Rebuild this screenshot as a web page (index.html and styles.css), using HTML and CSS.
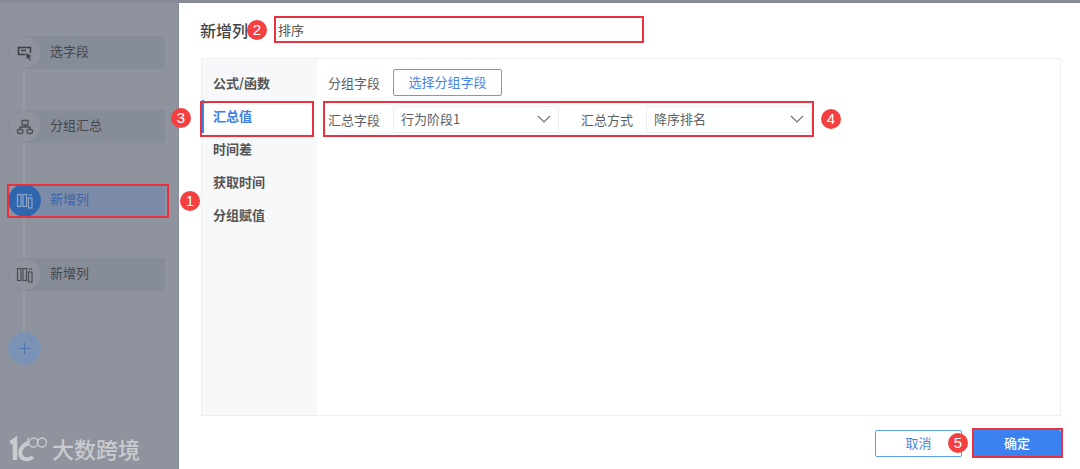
FILE: index.html
```html
<!DOCTYPE html>
<html lang="zh">
<head>
<meta charset="utf-8">
<title>新增列</title>
<link rel="stylesheet" href="styles.css">
</head>
<body>
<div class="app">
  <div class="topstrip"></div>
  <div class="content">
    <aside class="side">
      <div class="rail"></div>
      <div class="step">
        <span class="dot"><svg width="18" height="18" viewBox="0 0 18 18"><path d="M9.500 10.500h-7v-7h12v5.500" fill="none" stroke="#3c3f47" stroke-width="1.500"/><path d="M5 6.500h5" stroke="#3c3f47" stroke-width="1.500"/><path d="M10 9l5.500 3-2.200 1 1.500 3-1 .5-1.500-2.800-1.500 1.300z" fill="#3c3f47"/></svg></span>
        <span class="label">选字段</span>
      </div>
      <div class="step">
        <span class="dot"><svg width="18" height="18" viewBox="0 0 18 18" fill="none" stroke="#4a4d55" stroke-width="1.300"><rect x="6" y="2.500" width="6" height="4.500" rx=".5"/><rect x="1.500" y="11.500" width="5.500" height="4" rx="1.500"/><rect x="11" y="11.500" width="5.500" height="4" rx="1.500"/><path d="M9 7v2M4 11.500v-2.500h10v2.500"/></svg></span>
        <span class="label">分组汇总</span>
      </div>
      <div class="step active">
        <span class="dot"><svg width="18" height="18" viewBox="0 0 18 18" fill="none" stroke="#8fa6c9" stroke-width="1.200"><rect x="1.500" y="2.500" width="3.500" height="12"/><rect x="7" y="2.500" width="3.500" height="12"/><rect x="12.500" y="6" width="3.500" height="10"/><path d="M12.500 3h3.500"/></svg></span>
        <span class="label">新增列</span>
      </div>
      <div class="step">
        <span class="dot"><svg width="18" height="18" viewBox="0 0 18 18" fill="none" stroke="#4a4d55" stroke-width="1.200"><rect x="1.500" y="2.500" width="3.500" height="12"/><rect x="7" y="2.500" width="3.500" height="12"/><rect x="12.500" y="6" width="3.500" height="10"/><path d="M12.500 3h3.500"/></svg></span>
        <span class="label">新增列</span>
      </div>
      <div class="step add">
        <span class="dot"><svg width="11" height="11" viewBox="0 0 11 11"><path d="M5.500 0v11M0 5.500h11" stroke="#4f71ad" stroke-width="1"/></svg></span>
      </div>
      <div class="brand">
        <svg class="brand-logo" width="40" height="30" viewBox="0 0 40 30" fill="none" stroke="#c9cbce"><path d="M2.500 10L7 7V27" stroke-width="4.500"/><path d="M20 10C13 13 11 19 13 23C15 27 21 27 25 24" stroke-width="4"/><path d="M20 4.500V13" stroke-width="1.300"/><circle cx="25.500" cy="9.500" r="4.500" stroke-width="1.300"/><circle cx="34" cy="9.500" r="4.500" stroke-width="1.300"/></svg>
        <span class="brand-text">大数跨境</span>
      </div>
    </aside>
    <main class="dialog">
      <header class="head">
        <span class="title">新增列:</span>
        <div class="name-input">排序</div>
      </header>
      <section class="panel">
        <nav class="menu">
          <div class="menu-item">公式/函数</div>
          <div class="menu-item current">汇总值</div>
          <div class="menu-item">时间差</div>
          <div class="menu-item">获取时间</div>
          <div class="menu-item">分组赋值</div>
        </nav>
        <div class="form">
          <div class="row">
            <span class="field-label">分组字段</span>
            <button class="pick">选择分组字段</button>
          </div>
          <div class="row second">
            <span class="field-label">汇总字段</span>
            <div class="select"><span>行为阶段1</span><svg width="14" height="8" viewBox="0 0 14 8"><path d="M1 1l6 6 6-6" fill="none" stroke="#6c6f75" stroke-width="1.100"/></svg></div>
            <span class="field-label gap">汇总方式</span>
            <div class="select"><span>降序排名</span><svg width="14" height="8" viewBox="0 0 14 8"><path d="M1 1l6 6 6-6" fill="none" stroke="#6c6f75" stroke-width="1.100"/></svg></div>
          </div>
        </div>
      </section>
      <footer class="foot">
        <button class="btn ghost">取消</button>
        <button class="btn solid">确定</button>
      </footer>
    </main>
  </div>
  <i class="box b1"></i><i class="box b2"></i><i class="box b3"></i><i class="box b4"></i><i class="box b5"></i>
  <b class="badge n1">1</b><b class="badge n2">2</b><b class="badge n3">3</b><b class="badge n4">4</b><b class="badge n5">5</b>
</div>
</body>
</html>
```
FILE: styles.css
```css
* { box-sizing: border-box; }
html, body { margin: 0; padding: 0; }
body { width: 1080px; height: 469px; overflow: hidden; background: #fff; font-family: "Noto Sans CJK SC", "Liberation Sans", sans-serif; color: #555; }
.app { position: relative; width: 1080px; height: 469px; display: flex; flex-direction: column; }
.topstrip { height: 3px; background: #858a94; flex: none; }
.content { flex: 1; display: flex; min-height: 0; }

.side { position: relative; width: 179px; flex: none; background: #8e939d; padding: 33px 13px 0 8px; border-right: 1px solid #858a95; }
.rail { position: absolute; left: 23px; top: 50px; width: 2px; height: 280px; background: #989ca5; }
.step { position: relative; display: flex; align-items: center; height: 33px; margin-bottom: 41px; background: linear-gradient(to right, transparent 16px, #878d98 16px); border-radius: 2px; }
.dot { position: relative; width: 33px; height: 33px; border-radius: 50%; background: #8e939d; border: 1px solid #898e98; display: flex; align-items: center; justify-content: center; flex: none; }
.label { margin-left: 9px; margin-top: -4px; font-size: 13px; color: #44474f; }
.step.active { background: linear-gradient(to right, transparent 16px, #7b8ba8 16px); }
.step.active .dot { background: #2f66ae; border-color: #2f66ae; }
.step.active .label { color: #3d65a8; }
.step.add { background: none; margin: 0; }
.step.add .dot { background: #7a92b5; border-color: #7a92b5; }
.brand { position: absolute; left: 8px; top: 430px; display: flex; align-items: center; gap: 4px; height: 30px; }
.brand-logo { flex: none; }
.brand-text { font-size: 22px; font-weight: 500; line-height: 30px; color: #c9cbce; white-space: nowrap; }

.dialog { flex: 1; min-width: 0; display: flex; flex-direction: column; padding: 14px 19px 12px 21px; }
.head { display: flex; align-items: center; height: 25px; }
.title { font-size: 16px; font-weight: 500; color: #444; width: 74px; flex: none; white-space: nowrap; overflow: hidden; }
.name-input { width: 369px; height: 25px; padding-left: 4px; font-size: 13px; line-height: 25px; color: #555; }
.panel { margin: 16px 0 0 1px; height: 359px; display: flex; border: 1px solid #eceef1; }
.menu { width: 115px; flex: none; background: #f7f8fa; padding-top: 8px; }
.menu-item { height: 33px; padding-left: 9px; font-size: 13px; line-height: 32px; font-weight: 700; color: #555; border-left: 2px solid transparent; }
.menu-item.current { background: #fff; color: #3d7ee8; border-left-color: #3d7ee8; }
.form { flex: 1; min-width: 0; padding: 10px 0 0 11px; }
.row { display: flex; align-items: center; height: 27px; }
.row.second { margin-top: 10px; }
.field-label { width: 65px; flex: none; padding-bottom: 1px; font-size: 13px; color: #5c5f65; }
.field-label.gap { margin-left: 22px; }
.pick { width: 109px; height: 27px; padding: 0 0 2px; background: #fff; border: 1px solid #5aa0ec; border-radius: 2px; font: inherit; font-size: 13px; color: #4a84e6; }
.select { width: 166px; height: 27px; display: flex; align-items: center; justify-content: space-between; padding: 0 7px 2px 7px; border: 1px solid #eceef1; font-size: 13px; color: #5c5f65; }
.foot { margin-top: 14px; display: flex; justify-content: flex-end; gap: 11px; }
.btn { width: 88px; height: 27px; padding: 0 0 2px; font: inherit; font-size: 13px; border-radius: 2px; }
.ghost { width: 87px; background: #fff; border: 1px solid #5aa0ec; color: #4a84e6; }
.solid { background: #3b82f0; border: 0; color: #fff; font-weight: 500; }

.box { position: absolute; border: 2px solid #e8333f; pointer-events: none; }
.b1 { left: 7px; top: 184px; width: 162px; height: 34px; }
.b2 { left: 274px; top: 16px; width: 370px; height: 27px; }
.b3 { left: 200px; top: 101px; width: 114px; height: 36px; }
.b4 { left: 323px; top: 101px; width: 491px; height: 36px; }
.b5 { left: 972px; top: 428px; width: 91px; height: 30px; }
.badge { position: absolute; width: 20px; height: 20px; border-radius: 50%; background: #f44040; color: #fff; font: 400 15px/20px "Liberation Sans", sans-serif; text-align: center; }
.n1 { left: 180px; top: 191px; }
.n2 { left: 247px; top: 20px; }
.n3 { left: 171px; top: 108px; }
.n4 { left: 821px; top: 109px; }
.n5 { left: 948px; top: 433px; }
```
